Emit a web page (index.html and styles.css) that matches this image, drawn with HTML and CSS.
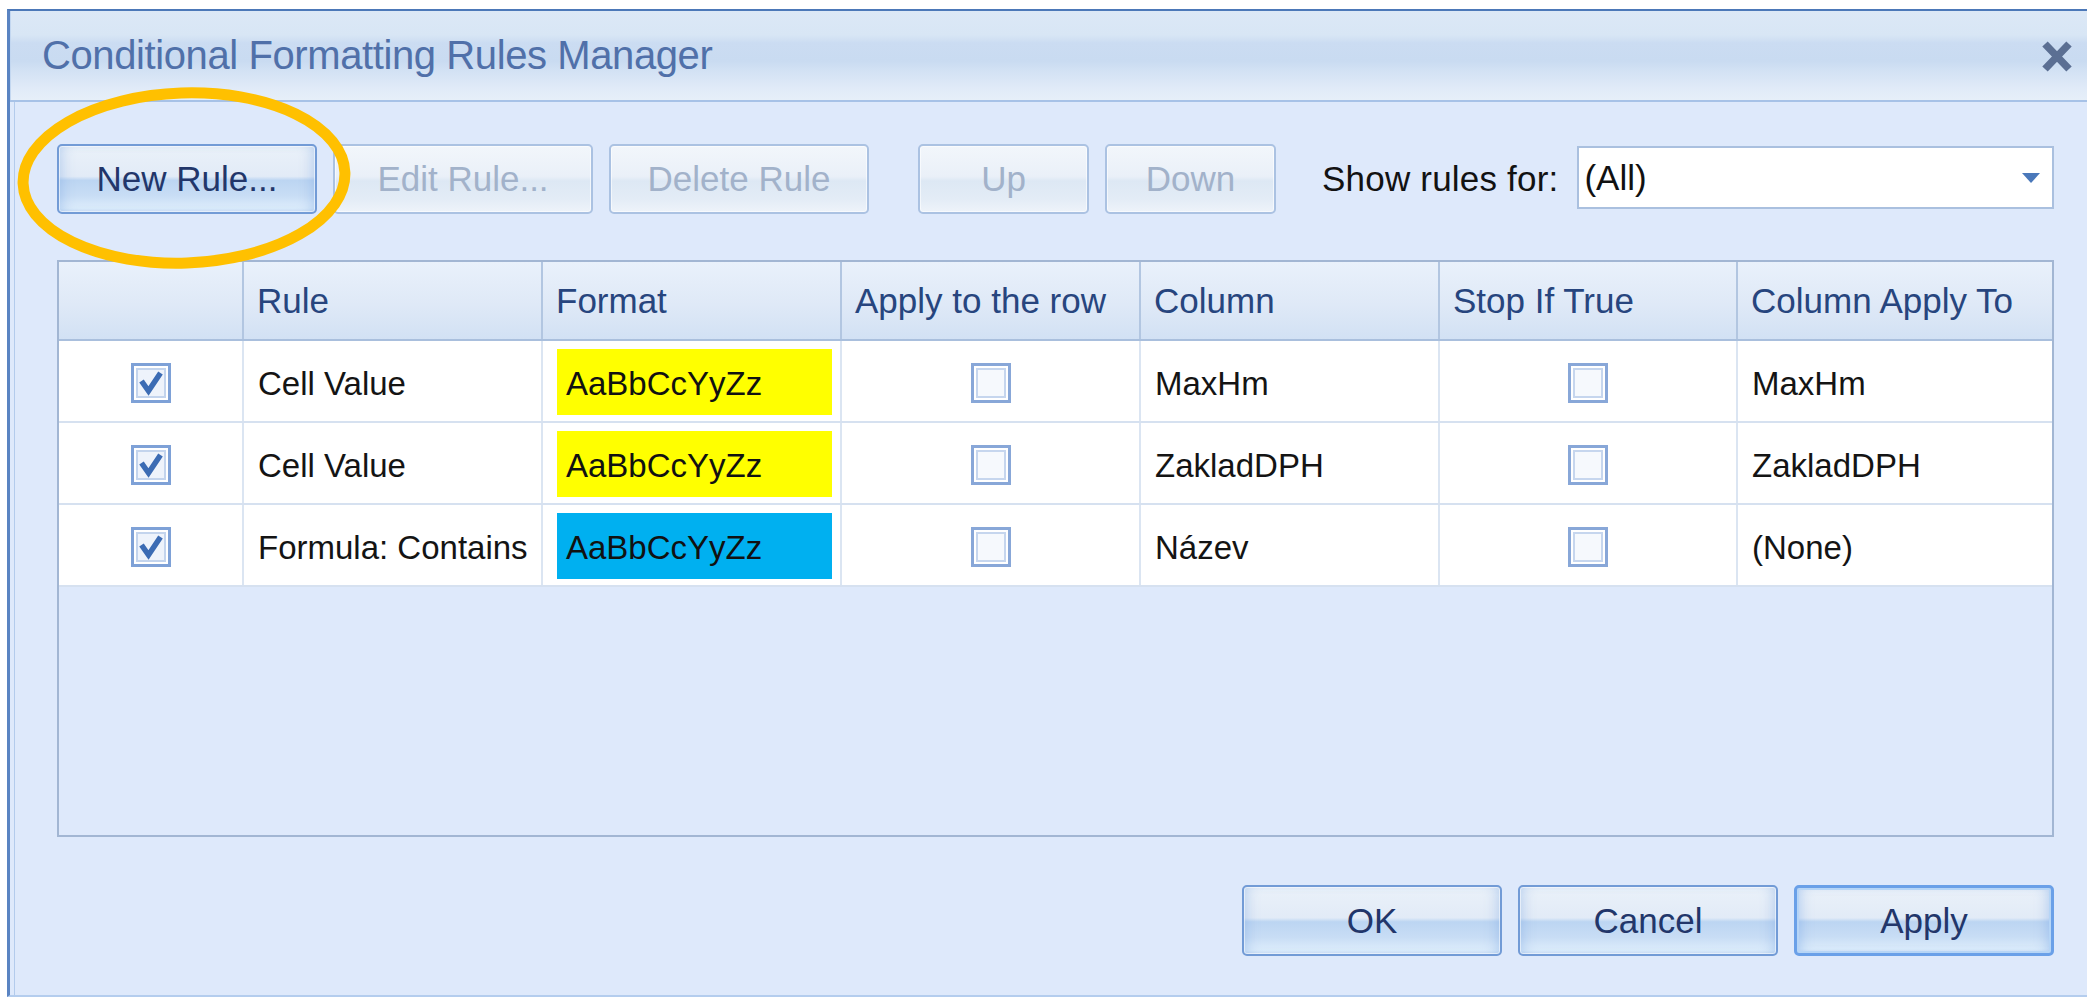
FILE: index.html
```html
<!DOCTYPE html>
<html lang="en">
<head>
<meta charset="utf-8">
<title>Conditional Formatting Rules Manager</title>
<link rel="stylesheet" href="styles.css">
</head>
<body>
<div class="window">
  <div class="titlebar">
    <span class="title">Conditional Formatting Rules Manager</span>
    <svg class="close" width="32" height="31" viewBox="0 0 32 31" aria-label="Close">
      <path d="M4 3 L28 28 M28 3 L4 28" stroke="#5b6f93" stroke-width="7.5" fill="none"/>
    </svg>
  </div>

  <div class="panel">
    <div class="toolbar">
      <button class="btn">New Rule...</button>
      <button class="btn" disabled>Edit Rule...</button>
      <button class="btn" disabled>Delete Rule</button>
      <button class="btn btn-move btn-up" disabled>Up</button>
      <button class="btn btn-move btn-down" disabled>Down</button>
      <span class="show-label">Show rules for:</span>
      <div class="combo">
        <span class="combo-value">(All)</span>
        <svg class="combo-arrow" width="18" height="10" viewBox="0 0 18 10"><path d="M0 0 H18 L9 10 Z" fill="#4a78ba"/></svg>
      </div>
    </div>

    <div class="rules">
      <div class="row head">
        <div class="cell"></div>
        <div class="cell">Rule</div>
        <div class="cell">Format</div>
        <div class="cell">Apply to the row</div>
        <div class="cell">Column</div>
        <div class="cell">Stop If True</div>
        <div class="cell">Column Apply To</div>
      </div>

      <div class="row">
        <div class="cell cell-center">
          <svg class="chk" width="40" height="40" viewBox="0 0 40 40"><rect x="1.5" y="1.5" width="37" height="37" fill="#fff" stroke="#7ea1d7" stroke-width="3"/><rect x="6" y="6" width="28" height="28" fill="#eef3fb" stroke="#c3d4ed" stroke-width="2"/><path d="M10.5 18 L17.5 28 L29.5 10" fill="none" stroke="#3c6cb4" stroke-width="5.5"/></svg>
        </div>
        <div class="cell cell-text">Cell Value</div>
        <div class="cell cell-format"><span class="swatch swatch-yellow">AaBbCcYyZz</span></div>
        <div class="cell cell-center">
          <svg class="chk" width="40" height="40" viewBox="0 0 40 40"><rect x="1.5" y="1.5" width="37" height="37" fill="#fff" stroke="#88a7d8" stroke-width="3"/><rect x="6" y="6" width="28" height="28" fill="#f6f9fd" stroke="#c6d6ee" stroke-width="2"/></svg>
        </div>
        <div class="cell cell-text">MaxHm</div>
        <div class="cell cell-center">
          <svg class="chk" width="40" height="40" viewBox="0 0 40 40"><rect x="1.5" y="1.5" width="37" height="37" fill="#fff" stroke="#88a7d8" stroke-width="3"/><rect x="6" y="6" width="28" height="28" fill="#f6f9fd" stroke="#c6d6ee" stroke-width="2"/></svg>
        </div>
        <div class="cell cell-text">MaxHm</div>
      </div>

      <div class="row">
        <div class="cell cell-center">
          <svg class="chk" width="40" height="40" viewBox="0 0 40 40"><rect x="1.5" y="1.5" width="37" height="37" fill="#fff" stroke="#7ea1d7" stroke-width="3"/><rect x="6" y="6" width="28" height="28" fill="#eef3fb" stroke="#c3d4ed" stroke-width="2"/><path d="M10.5 18 L17.5 28 L29.5 10" fill="none" stroke="#3c6cb4" stroke-width="5.5"/></svg>
        </div>
        <div class="cell cell-text">Cell Value</div>
        <div class="cell cell-format"><span class="swatch swatch-yellow">AaBbCcYyZz</span></div>
        <div class="cell cell-center">
          <svg class="chk" width="40" height="40" viewBox="0 0 40 40"><rect x="1.5" y="1.5" width="37" height="37" fill="#fff" stroke="#88a7d8" stroke-width="3"/><rect x="6" y="6" width="28" height="28" fill="#f6f9fd" stroke="#c6d6ee" stroke-width="2"/></svg>
        </div>
        <div class="cell cell-text">ZakladDPH</div>
        <div class="cell cell-center">
          <svg class="chk" width="40" height="40" viewBox="0 0 40 40"><rect x="1.5" y="1.5" width="37" height="37" fill="#fff" stroke="#88a7d8" stroke-width="3"/><rect x="6" y="6" width="28" height="28" fill="#f6f9fd" stroke="#c6d6ee" stroke-width="2"/></svg>
        </div>
        <div class="cell cell-text">ZakladDPH</div>
      </div>

      <div class="row">
        <div class="cell cell-center">
          <svg class="chk" width="40" height="40" viewBox="0 0 40 40"><rect x="1.5" y="1.5" width="37" height="37" fill="#fff" stroke="#7ea1d7" stroke-width="3"/><rect x="6" y="6" width="28" height="28" fill="#eef3fb" stroke="#c3d4ed" stroke-width="2"/><path d="M10.5 18 L17.5 28 L29.5 10" fill="none" stroke="#3c6cb4" stroke-width="5.5"/></svg>
        </div>
        <div class="cell cell-text">Formula: Contains</div>
        <div class="cell cell-format"><span class="swatch swatch-cyan">AaBbCcYyZz</span></div>
        <div class="cell cell-center">
          <svg class="chk" width="40" height="40" viewBox="0 0 40 40"><rect x="1.5" y="1.5" width="37" height="37" fill="#fff" stroke="#88a7d8" stroke-width="3"/><rect x="6" y="6" width="28" height="28" fill="#f6f9fd" stroke="#c6d6ee" stroke-width="2"/></svg>
        </div>
        <div class="cell cell-text">Název</div>
        <div class="cell cell-center">
          <svg class="chk" width="40" height="40" viewBox="0 0 40 40"><rect x="1.5" y="1.5" width="37" height="37" fill="#fff" stroke="#88a7d8" stroke-width="3"/><rect x="6" y="6" width="28" height="28" fill="#f6f9fd" stroke="#c6d6ee" stroke-width="2"/></svg>
        </div>
        <div class="cell cell-text">(None)</div>
      </div>
    </div>

    <div class="footer">
      <button class="btn">OK</button>
      <button class="btn">Cancel</button>
      <button class="btn btn-default">Apply</button>
    </div>
  </div>
</div>

<svg class="highlight" width="344" height="194" viewBox="0 0 344 194">
  <ellipse cx="172" cy="97" rx="161" ry="85" fill="none" stroke="#ffc000" stroke-width="11" transform="rotate(-2 172 97)"/>
</svg>
</body>
</html>
```

FILE: styles.css
```css
html, body {
  margin: 0;
  padding: 0;
}

body {
  background: #ffffff;
  overflow: hidden;
  font-family: "Liberation Sans", Arial, sans-serif;
  position: relative;
  width: 2087px;
  height: 997px;
}

/* dialog frame */
.window {
  margin: 9px 0 0 7px;
  height: 988px;
  box-sizing: border-box;
  border-top: 2px solid #4c78b8;
  border-left: 3px solid #5a84c2;
  border-bottom: 2px solid #b4cdee;
  background: #dee9fb;
  display: flex;
  flex-direction: column;
}

.titlebar {
  height: 89px;
  flex: none;
  display: flex;
  align-items: center;
  padding: 0 14px 0 32px;
  background: linear-gradient(to bottom,
    #dce8f6 0px, #d8e6f5 24px, #cbdcf2 32px, #c9dbf1 50px,
    #d3e2f4 60px, #e1ebf8 78px, #e6eff9 89px);
  box-shadow: inset 1px 0 0 #c3d7f0;
}

.title {
  flex: 1;
  font-size: 40px;
  color: #5070a9;
  letter-spacing: -0.4px;
}

.close {
  flex: none;
  margin-top: 1px;
}

.panel {
  flex: 1;
  border-top: 2px solid #a7c2e7;
  padding: 42px 33px 0 47px;
  box-shadow: inset 4px 0 0 #dee9fb, inset 5px 0 0 #b3cbec;
  display: flex;
  flex-direction: column;
}

/* buttons */
.btn {
  font-family: inherit;
  font-size: 35px;
  width: 260px;
  height: 70px;
  padding: 0;
  margin: 0;
  box-sizing: border-box;
  border: 2px solid #729bd6;
  border-radius: 5px;
  color: #22366a;
  background: linear-gradient(to bottom,
    #eaf1f9 0%, #e2ebf7 46%, #bcd5f2 52%, #c8ddf5 75%, #dcecfb 94%, #cfe2f7 100%);
  box-shadow: inset 0 0 0 1px rgba(255, 255, 255, 0.55), inset 10px 0 14px -8px rgba(120, 165, 225, 0.45), inset -10px 0 14px -8px rgba(120, 165, 225, 0.45);
}

.btn:disabled {
  color: #a2b2ca;
  border-color: #abc2e2;
  background: linear-gradient(to bottom,
    #f2f6fb 0%, #eaf0f8 46%, #dde8f4 53%, #e3ecf6 80%, #eef3fa 100%);
  box-shadow: inset 0 0 0 1px rgba(255, 255, 255, 0.6);
}

.btn-default {
  border: 3px solid #6aa0e8;
  box-shadow: inset 0 0 0 2px #b6d5f6, inset 10px 0 14px -8px rgba(110, 160, 230, 0.5), inset -10px 0 14px -8px rgba(110, 160, 230, 0.5);
}

.toolbar {
  height: 70px;
  flex: none;
  display: flex;
  align-items: center;
  gap: 16px;
}

.btn-move {
  width: 171px;
}

.btn-up {
  margin-left: 33px;
}

.show-label {
  margin-left: 30px;
  font-size: 35px;
  color: #121212;
  white-space: nowrap;
  letter-spacing: 0.2px;
}

.combo {
  flex: 1;
  height: 63px;
  margin-top: -3px;
  margin-left: 3px;
  box-sizing: border-box;
  border: 2px solid #aac0df;
  background: #ffffff;
  display: flex;
  align-items: center;
  padding: 0 12px 0 5px;
}

.combo-value {
  flex: 1;
  font-size: 35px;
  color: #111111;
}

.combo-arrow {
  flex: none;
}

/* rules grid */
.rules {
  margin-top: 46px;
  height: 577px;
  flex: none;
  box-sizing: border-box;
  border: 2px solid #a2b6d3;
  background: #dee9fb;
}

.row {
  display: grid;
  grid-template-columns: 185px 299px 299px 299px 299px 298px 1fr;
  height: 82px;
  box-sizing: border-box;
  border-bottom: 2px solid #d6e1f0;
  background: #ffffff;
}

.cell {
  border-right: 2px solid #dbe5f2;
  padding-left: 14px;
  display: flex;
  align-items: center;
  font-size: 33px;
  color: #141414;
  white-space: nowrap;
  overflow: hidden;
  min-width: 0;
}

.cell:last-child {
  border-right: none;
}

.cell-text {
  padding-top: 5px;
}

.head {
  height: 79px;
  background: linear-gradient(to bottom, #e9f1fb 0%, #dfe9f7 55%, #d2e1f4 100%);
  border-bottom: 2px solid #a9bfdd;
}

.head .cell {
  border-right-color: #b2c6e1;
  padding-left: 13px;
  font-size: 35px;
  color: #27457e;
}

.cell-center {
  justify-content: center;
  padding-left: 0;
}

.cell-format {
  padding: 8px 8px 6px 14px;
  align-items: stretch;
}

.swatch {
  flex: 1;
  display: flex;
  align-items: center;
  padding: 4px 0 0 9px;
  color: #111111;
}

.swatch-yellow {
  background: #ffff00;
}

.swatch-cyan {
  background: #00b0f0;
}

.chk {
  display: block;
  margin-top: 3px;
}

.footer {
  margin-top: 48px;
  flex: none;
  display: flex;
  justify-content: flex-end;
  gap: 16px;
}

.footer .btn {
  height: 71px;
}

/* annotation ring drawn over the dialog */
.highlight {
  position: absolute;
  left: 12px;
  top: 81px;
  pointer-events: none;
}
```
